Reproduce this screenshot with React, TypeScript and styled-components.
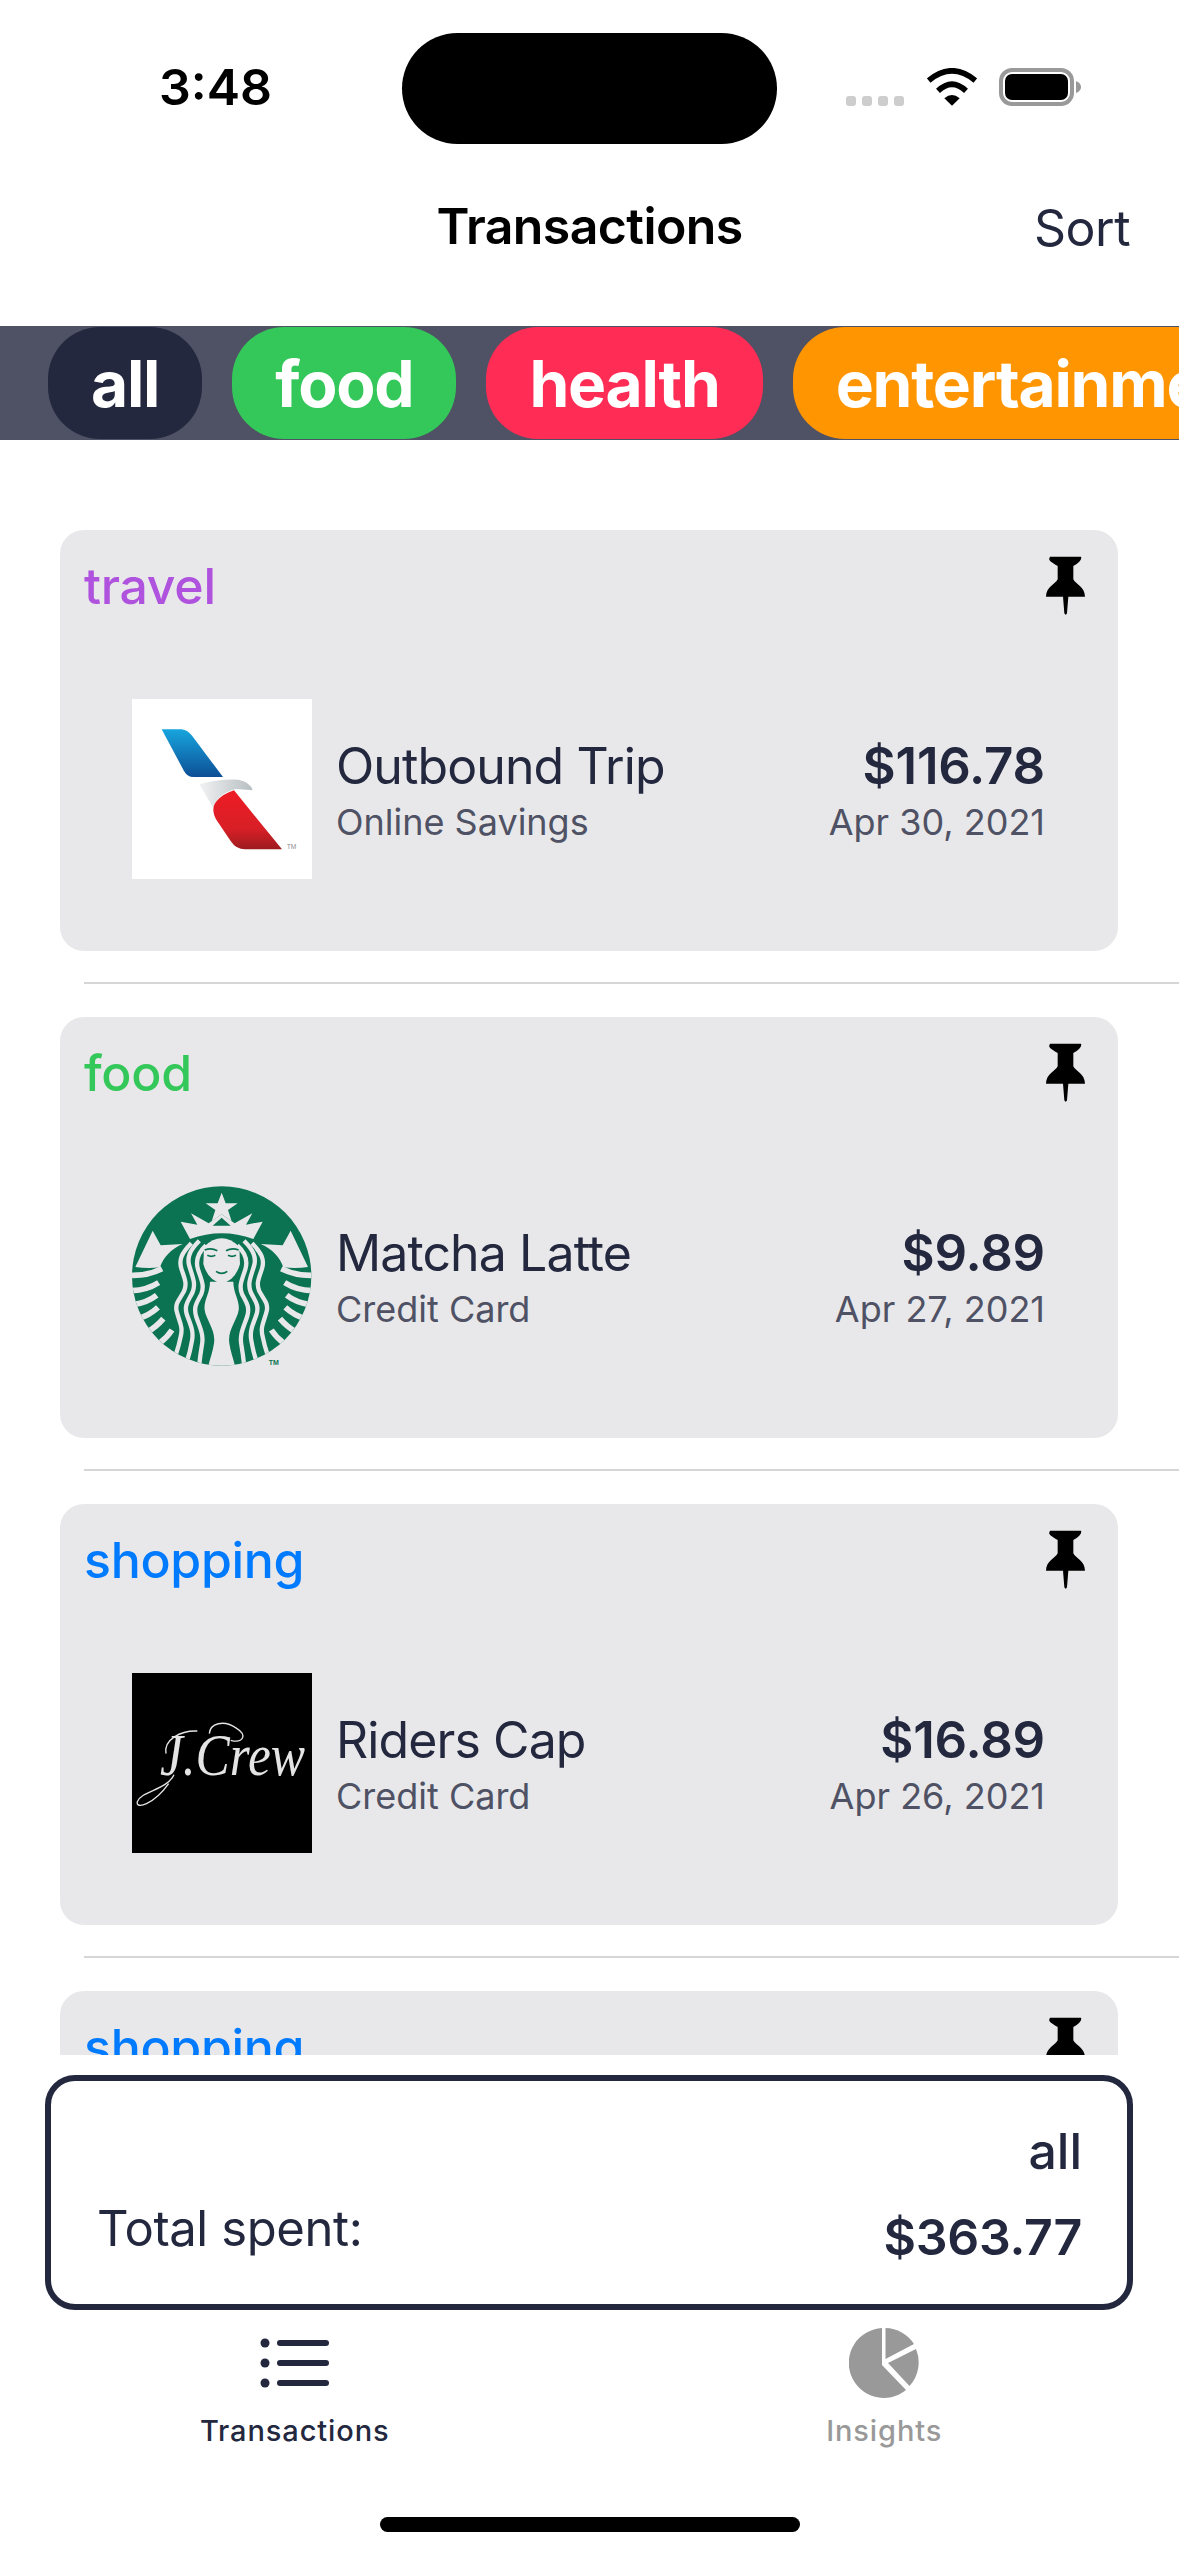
import { FC, ReactNode } from "react";
import styled, { createGlobalStyle } from "styled-components";

const NAVY = "#23283f";
const FONT = `Inter, "Noto Sans", sans-serif`;

const GlobalStyle = createGlobalStyle`
    html, body {
        margin: 0;
        padding: 0;
        background: #fff;
    }
    * {
        box-sizing: border-box;
    }
`;

const Screen = styled.div`
    width: 1179px;
    height: 2556px;
    display: flex;
    flex-direction: column;
    overflow: hidden;
    background: #fff;
    font-family: ${FONT};
    color: ${NAVY};
`;

const StatusBar = styled.div`
    height: 144px;
    padding-top: 33px;
    display: grid;
    grid-template-columns: 402px 375px 1fr;
    flex-shrink: 0;
`;

const Clock = styled.div`
    padding: 29px 0 0 159px;
    font-size: 50px;
    line-height: 50px;
    font-weight: 600;
    color: #000;
`;

const Island = styled.div`
    height: 111px;
    border-radius: 56px;
    background: #000;
`;

const StatusIcons = styled.div`
    display: flex;
    align-items: flex-start;
    padding: 35px 0 0 69px;
`;

const SignalDots = styled.div`
    display: flex;
    gap: 6px;
    margin: 28px 23px 0 0;
`;

const SignalDot = styled.span`
    width: 10px;
    height: 10px;
    border-radius: 3px;
    background: #cdcdcd;
`;

const WifiIcon = styled.svg`
    width: 50px;
    height: 38px;
    margin-right: 22px;
`;

const BatteryIcon = styled.svg`
    width: 82px;
    height: 38px;
`;

const Header = styled.div`
    height: 182px;
    flex-shrink: 0;
    display: grid;
    grid-template-columns: 1fr auto 1fr;
    padding: 52px 49px 0;
`;

const Title = styled.div`
    grid-column: 2;
    font-size: 50px;
    line-height: 60px;
    font-weight: 600;
    color: #000;
    letter-spacing: -0.6px;
`;

const SortButton = styled.div`
    justify-self: end;
    font-size: 50px;
    line-height: 60px;
    letter-spacing: -0.5px;
    margin-top: 2px;
`;

const CategoryBar = styled.div`
    height: 114px;
    flex-shrink: 0;
    display: flex;
    gap: 30px;
    padding: 1px 0 1px 48px;
    overflow: hidden;
    background: #4f5164;
`;

const Pill = styled.div<{ $bg: string }>`
    flex-shrink: 0;
    display: flex;
    align-items: center;
    padding: 0 43px;
    border-radius: 52px;
    background: ${({ $bg }) => $bg};
    color: #fff;
    font-size: 64px;
    font-weight: 700;
    letter-spacing: -1.2px;
`;

const List = styled.div`
    flex: 1;
    min-height: 0;
    overflow: hidden;
    padding-top: 90px;
`;

const Card = styled.div`
    height: 421px;
    margin: 0 61px 0 60px;
    border-radius: 24px;
    background: #e8e8ea;
    overflow: hidden;
`;

const CardTop = styled.div`
    height: 59px;
    margin-top: 26px;
    padding: 0 33px 0 24px;
    display: flex;
    justify-content: space-between;
    align-items: flex-start;
`;

const CategoryLabel = styled.div<{ $color: string }>`
    padding-top: 1px;
    font-size: 50px;
    line-height: 58px;
    font-weight: 500;
    letter-spacing: -0.3px;
    color: ${({ $color }) => $color};
`;

const PinIcon = styled.svg`
    width: 39px;
    height: 59px;
`;

const Row = styled.div`
    margin-top: 84px;
    padding: 0 73px 0 72px;
    display: flex;
    align-items: center;
    gap: 24px;
`;

const Logo = styled.div<{ $bg: string }>`
    width: 180px;
    height: 180px;
    flex-shrink: 0;
    background: ${({ $bg }) => $bg};
    svg {
        display: block;
        width: 180px;
        height: 180px;
    }
`;

const RowText = styled.div<{ $right?: boolean }>`
    flex: ${({ $right }) => ($right ? "0 0 auto" : 1)};
    padding-top: 2px;
    text-align: ${({ $right }) => ($right ? "right" : "left")};
`;

const RowTitle = styled.div`
    font-size: 50px;
    line-height: 60px;
    letter-spacing: -0.9px;
`;

const Amount = styled.div`
    font-size: 51px;
    line-height: 60px;
    font-weight: 600;
    letter-spacing: -0.2px;
`;

const RowSub = styled.div`
    margin-top: 3px;
    font-size: 36px;
    line-height: 46px;
    color: #4f5164;
`;

const Separator = styled.div`
    height: 2px;
    margin: 31px 0 33px 84px;
    background: #d6d6d8;
`;

const TotalBox = styled.div`
    height: 235px;
    flex-shrink: 0;
    margin: 20px 46px 0 45px;
    padding: 41px 45px 0 46px;
    border: 6px solid ${NAVY};
    border-radius: 30px;
    background: #fff;
`;

const TotalTag = styled.div`
    text-align: right;
    font-size: 50px;
    line-height: 58px;
    font-weight: 500;
`;

const TotalRow = styled.div`
    margin-top: 20px;
    display: flex;
    justify-content: space-between;
    align-items: flex-start;
`;

const TotalLabel = styled.div`
    font-size: 49px;
    line-height: 58px;
    letter-spacing: -0.4px;
`;

const TotalAmount = styled.div`
    margin-top: 7px;
    font-size: 50px;
    line-height: 60px;
    font-weight: 600;
    letter-spacing: -0.3px;
`;

const TabBar = styled.div`
    height: 207px;
    flex-shrink: 0;
    display: grid;
    grid-template-columns: 1fr 1fr;
    padding-top: 18px;
`;

const Tab = styled.div<{ $active?: boolean }>`
    display: flex;
    flex-direction: column;
    align-items: center;
    color: ${({ $active }) => ($active ? NAVY : "#999999")};
`;

const TabIconSlot = styled.div`
    height: 70px;
    display: flex;
    align-items: center;
    svg {
        display: block;
    }
`;

const TabLabel = styled.div`
    margin-top: 15px;
    font-size: 29px;
    line-height: 36px;
    font-weight: 500;
    letter-spacing: 0.9px;
`;

const HomeIndicator = styled.div`
    width: 420px;
    height: 15px;
    flex-shrink: 0;
    margin: 0 auto 24px;
    border-radius: 8px;
    background: #000;
`;

const Pin: FC = () => (
    <PinIcon viewBox="78 48 117 177">
        <path
            d="M90 50H183Q188 62 160 78V118C166 132 195 140 195 170H145L141 220Q137 228 133 220L129 170H78C78 140 107 132 113 118V78C86 62 85 60 90 50Z"
            fill="#000"
        />
    </PinIcon>
);

const AirlineLogo: FC = () => (
    <svg viewBox="66 56 540 540">
        <defs>
            <linearGradient id="aaBlue" x1="0" y1="0" x2="0" y2="1">
                <stop offset="0" stopColor="#17a5de" />
                <stop offset="1" stopColor="#0d4f96" />
            </linearGradient>
            <linearGradient id="aaRed" x1="0" y1="0" x2="0" y2="1">
                <stop offset="0" stopColor="#ee1c25" />
                <stop offset="0.65" stopColor="#d81f26" />
                <stop offset="1" stopColor="#9c1c1f" />
            </linearGradient>
            <linearGradient id="aaGrey" x1="0" y1="0" x2="1" y2="0">
                <stop offset="0" stopColor="#f1f2f3" />
                <stop offset="1" stopColor="#b7bec2" />
            </linearGradient>
        </defs>
        <path d="M155 147H215Q232 149 245 165L339 290H250Q232 290 222 272Z" fill="url(#aaBlue)" />
        <path
            d="M268 312Q320 296 385 298Q420 304 428 330L378 326Q322 340 310 382Q290 350 268 312Z"
            fill="url(#aaGrey)"
        />
        <path
            d="M372 330L516 507H405Q378 507 362 482L320 420Q300 385 320 362Q340 340 372 330Z"
            fill="url(#aaRed)"
        />
        <text x="530" y="505" fontSize="20" fill="#8d9093" fontFamily="Liberation Sans, sans-serif">
            TM
        </text>
    </svg>
);

const STRANDS = [
    "M244 220C214 250 206 270 214 296C224 326 232 340 222 364C210 386 194 400 200 424C208 456 220 470 212 500C208 520 204 535 198 552",
    "M268 212C240 240 230 262 238 288C248 322 258 340 248 366C236 392 222 404 230 432C240 462 252 480 246 512C242 535 238 552 232 570",
    "M288 226C262 250 256 272 264 298C274 330 284 346 274 372C262 396 250 408 258 438C268 470 282 492 276 524C272 548 270 562 268 582",
];

const TAIL_BANDS = [
    "M60 316Q112 318 156 296",
    "M60 362Q108 362 146 338",
    "M70 404Q112 398 140 376",
    "M84 446Q118 436 144 412",
    "M112 486Q140 470 160 446",
    "M148 520Q170 504 186 480",
];

const MermaidLogo: FC = () => (
    <svg viewBox="66 48 540 540">
        <defs>
            <clipPath id="sealClip">
                <circle cx="335" cy="318" r="269" />
            </clipPath>
        </defs>
        <circle cx="335" cy="318" r="269" fill="#0b7351" />
        <g clipPath="url(#sealClip)" fill="none" stroke="#e8e8ea" strokeLinecap="butt">
            <path
                d="M300 335C300 370 280 392 284 420C288 450 318 480 312 520C308 550 298 570 292 600H378C372 570 362 550 358 520C352 480 382 450 386 420C390 392 370 370 370 335Z"
                fill="#e8e8ea"
                stroke="none"
            />
            <g strokeWidth="13">
                {STRANDS.map((d) => (
                    <path key={d} d={d} />
                ))}
                <g transform="matrix(-1 0 0 1 670 0)">
                    {STRANDS.map((d) => (
                        <path key={d} d={d} />
                    ))}
                </g>
            </g>
            <g strokeWidth="17">
                {TAIL_BANDS.map((d) => (
                    <path key={d} d={d} />
                ))}
                <g transform="matrix(-1 0 0 1 670 0)">
                    {TAIL_BANDS.map((d) => (
                        <path key={d} d={d} />
                    ))}
                </g>
            </g>
        </g>
        <path
            d="M335 68L347 100H383L354 120L365 154L335 133L305 154L316 120L287 100H323Z"
            fill="#e8e8ea"
        />
        <path
            d="M240 207L212 155L262 164L243 130L296 160L335 133L374 160L427 130L408 164L458 155L430 207Q335 172 240 207Z"
            fill="#e8e8ea"
        />
        <path d="M335 143L362 167H308Z" fill="#0b7351" />
        <path d="M76 291L128 182L152 226L218 222C182 238 160 262 150 292Q112 296 76 291Z" fill="#e8e8ea" />
        <path d="M594 291L542 182L518 226L452 222C488 238 510 262 520 292Q558 296 594 291Z" fill="#e8e8ea" />
        <path
            d="M282 230Q335 180 388 230L390 282Q376 332 335 340Q294 332 280 282Z"
            fill="#e8e8ea"
        />
        <g fill="none" stroke="#0b7351" strokeWidth="5">
            <path d="M284 240Q304 232 322 242" />
            <path d="M348 242Q366 232 386 240" />
            <path d="M292 256Q304 262 316 256" />
            <path d="M354 256Q366 262 378 256" />
            <path d="M318 304Q335 316 352 304" />
        </g>
        <text x="476" y="584" fontSize="21" fontWeight="600" fill="#0b7351" fontFamily="Liberation Sans, sans-serif">
            TM
        </text>
    </svg>
);

const ScriptLogo: FC = () => (
    <svg viewBox="66 40 540 540">
        <rect x="66" y="40" width="540" height="540" fill="#000" />
        <text
            transform="translate(150 345) scale(0.88 1)"
            fontSize="175"
            fontStyle="italic"
            fill="#e4e4e4"
            fontFamily="Liberation Serif, serif"
        >
            J.Crew
        </text>
        <g fill="none" stroke="#e4e4e4" strokeWidth="4">
            <path d="M192 345C170 392 96 392 82 426C76 450 130 436 176 372" />
            <path d="M262 214C212 212 160 240 168 282" />
            <path d="M298 222C300 192 340 178 380 206C412 226 400 252 362 242" />
        </g>
    </svg>
);

const BLUE = "#007aff";
const GREEN = "#34c759";

type Transaction = {
    category: string;
    color: string;
    name?: string;
    account?: string;
    amount?: string;
    date?: string;
    logo?: ReactNode;
    logoBg?: string;
};

const transactions: Transaction[] = [
    {
        category: "travel",
        color: "#af52de",
        name: "Outbound Trip",
        account: "Online Savings",
        amount: "$116.78",
        date: "Apr 30, 2021",
        logo: <AirlineLogo />,
        logoBg: "#fff",
    },
    {
        category: "food",
        color: GREEN,
        name: "Matcha Latte",
        account: "Credit Card",
        amount: "$9.89",
        date: "Apr 27, 2021",
        logo: <MermaidLogo />,
        logoBg: "transparent",
    },
    {
        category: "shopping",
        color: BLUE,
        name: "Riders Cap",
        account: "Credit Card",
        amount: "$16.89",
        date: "Apr 26, 2021",
        logo: <ScriptLogo />,
        logoBg: "#000",
    },
    { category: "shopping", color: BLUE },
];

const categories = [
    { label: "all", bg: NAVY },
    { label: "food", bg: GREEN },
    { label: "health", bg: "#ff2d55" },
    { label: "entertainment", bg: "#ff9500" },
];

const App: FC = () => (
    <Screen>
        <GlobalStyle />
        <StatusBar>
            <Clock>3:48</Clock>
            <Island />
            <StatusIcons>
                <SignalDots>
                    <SignalDot />
                    <SignalDot />
                    <SignalDot />
                    <SignalDot />
                </SignalDots>
                <WifiIcon viewBox="320 85 150 113">
                    <g fill="none" stroke="#000" strokeWidth="17">
                        <path d="M325 122Q395 64 465 122" />
                        <path d="M353 153Q395 113 437 153" />
                    </g>
                    <path d="M395 198L372 175Q395 156 418 175Z" fill="#000" />
                </WifiIcon>
                <BatteryIcon viewBox="0 0 82 38">
                    <rect x="2" y="2" width="71" height="34" rx="11" fill="none" stroke="#999" strokeWidth="4" />
                    <rect x="6" y="6" width="63" height="26" rx="7" fill="#000" />
                    <path d="M77 13Q82 15 82 19Q82 23 77 25Z" fill="#999" />
                </BatteryIcon>
            </StatusIcons>
        </StatusBar>
        <Header>
            <Title>Transactions</Title>
            <SortButton>Sort</SortButton>
        </Header>
        <CategoryBar>
            {categories.map((c) => (
                <Pill key={c.label} $bg={c.bg}>
                    {c.label}
                </Pill>
            ))}
        </CategoryBar>
        <List>
            {transactions.map((t, i) => (
                <div key={i}>
                    <Card>
                        <CardTop>
                            <CategoryLabel $color={t.color}>{t.category}</CategoryLabel>
                            <Pin />
                        </CardTop>
                        {t.name && (
                            <Row>
                                <Logo $bg={t.logoBg ?? "transparent"}>{t.logo}</Logo>
                                <RowText>
                                    <RowTitle>{t.name}</RowTitle>
                                    <RowSub>{t.account}</RowSub>
                                </RowText>
                                <RowText $right>
                                    <Amount>{t.amount}</Amount>
                                    <RowSub>{t.date}</RowSub>
                                </RowText>
                            </Row>
                        )}
                    </Card>
                    <Separator />
                </div>
            ))}
        </List>
        <TotalBox>
            <TotalTag>all</TotalTag>
            <TotalRow>
                <TotalLabel>Total spent:</TotalLabel>
                <TotalAmount>$363.77</TotalAmount>
            </TotalRow>
        </TotalBox>
        <TabBar>
            <Tab $active>
                <TabIconSlot>
                    <svg width="70" height="50" viewBox="0 0 70 50" fill={NAVY}>
                        <ellipse cx="5" cy="5" rx="4.5" ry="4.5" />
                        <ellipse cx="5" cy="25" rx="4.5" ry="4.5" />
                        <ellipse cx="5" cy="45" rx="4.5" ry="4.5" />
                        <rect x="17" y="2" width="52" height="6" rx="3" />
                        <rect x="17" y="22" width="52" height="6" rx="3" />
                        <rect x="17" y="42" width="52" height="6" rx="3" />
                    </svg>
                </TabIconSlot>
                <TabLabel>Transactions</TabLabel>
            </Tab>
            <Tab>
                <TabIconSlot>
                    <svg width="70" height="70" viewBox="0 0 70 70" fill="#999999">
                        <path d="M33 37V0A35 35 0 1 0 57 62Z" />
                        <path d="M36.5 0A35 35 0 0 1 65 16L36.5 31Z" />
                        <path d="M67 21A35 35 0 0 1 60.5 58L39 35Z" />
                    </svg>
                </TabIconSlot>
                <TabLabel>Insights</TabLabel>
            </Tab>
        </TabBar>
        <HomeIndicator />
    </Screen>
);

export default App;
